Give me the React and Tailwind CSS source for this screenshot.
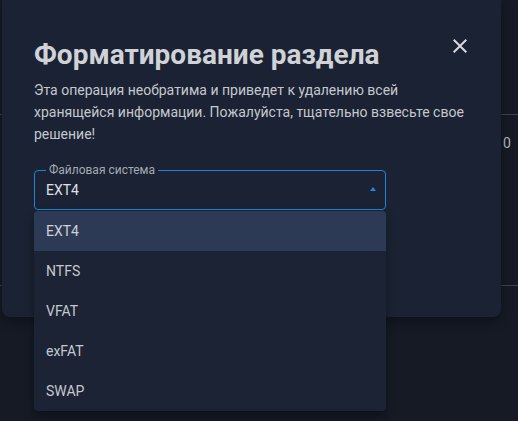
import React, { useState } from 'react';

const options = ['EXT4', 'NTFS', 'VFAT', 'exFAT', 'SWAP'];

export default function App() {
  const [fs, setFs] = useState('EXT4');

  return (
    <div
      className="relative w-[518px] h-[421px] overflow-hidden bg-[#151a25]"
      style={{ fontFamily: 'Roboto, "Liberation Sans", sans-serif' }}
    >
      {/* страница под модалкой */}
      <div className="pt-[114px]">
        <div className="h-[172px] border-t border-b border-[#3b424e] pl-[503px] pt-[18px] text-[14px] leading-[20px] text-[#b3b8c0]">
          0
        </div>
      </div>

      {/* модалка форматирования */}
      <div className="absolute left-[2px] top-0 w-[499px] h-[317px] rounded-b-[8px] bg-[#1b2233] shadow-[0_4px_12px_rgba(0,0,0,0.35)] px-[32px] pt-[39px]">
        <button className="absolute right-[29px] top-[34px] w-[24px] h-[24px] text-[#d6d8dc]">
          <svg viewBox="0 0 24 24" width="24" height="24" fill="currentColor">
            <path d="M19 6.41L17.59 5 12 10.59 6.41 5 5 6.41 10.59 12 5 17.59 6.41 19 12 13.41 17.59 19 19 17.59 13.41 12z" />
          </svg>
        </button>

        <h2 className="text-[28px] leading-[32px] font-bold text-[#cfd2d6] mb-[8px]">
          Форматирование раздела
        </h2>
        <p className="w-[435px] text-[14px] leading-[22px] text-[#c4c8ce]">
          Эта операция необратима и приведет к удалению всей хранящейся информации. Пожалуйста, тщательно взвесьте свое решение!
        </p>

        <div className="relative mt-[25px] w-[352px] h-[40px] rounded-[4px] border border-[#1d84d8] flex items-center justify-between pl-[11px] pr-[9px]">
          <span className="absolute left-[11px] top-[-7px] px-[3px] bg-[#1b2233] text-[12px] leading-[12px] text-[#a3aab5]">
            Файловая система
          </span>
          <span className="text-[14px] leading-[20px] text-[#dde0e4]">{fs}</span>
          <svg width="6" height="4" viewBox="0 0 6 4" className="mt-[-2px]">
            <path d="M0 4 L3 0 L6 4 Z" fill="#1e88e5" />
          </svg>

          <ul className="absolute left-[-1px] top-[40px] w-[352px] rounded-[4px] bg-[#1c2335] shadow-[0_5px_10px_rgba(0,0,0,0.35)] overflow-hidden">
            {options.map((o) => (
              <li
                key={o}
                onClick={() => setFs(o)}
                className={
                  o === fs
                    ? 'h-[40px] flex items-center pl-[12px] text-[14px] text-[#cdd1d6] bg-[#2d3a55]'
                    : 'h-[40px] flex items-center pl-[12px] text-[14px] text-[#c5c9ce]'
                }
              >
                {o}
              </li>
            ))}
          </ul>
        </div>
      </div>
    </div>
  );
}
